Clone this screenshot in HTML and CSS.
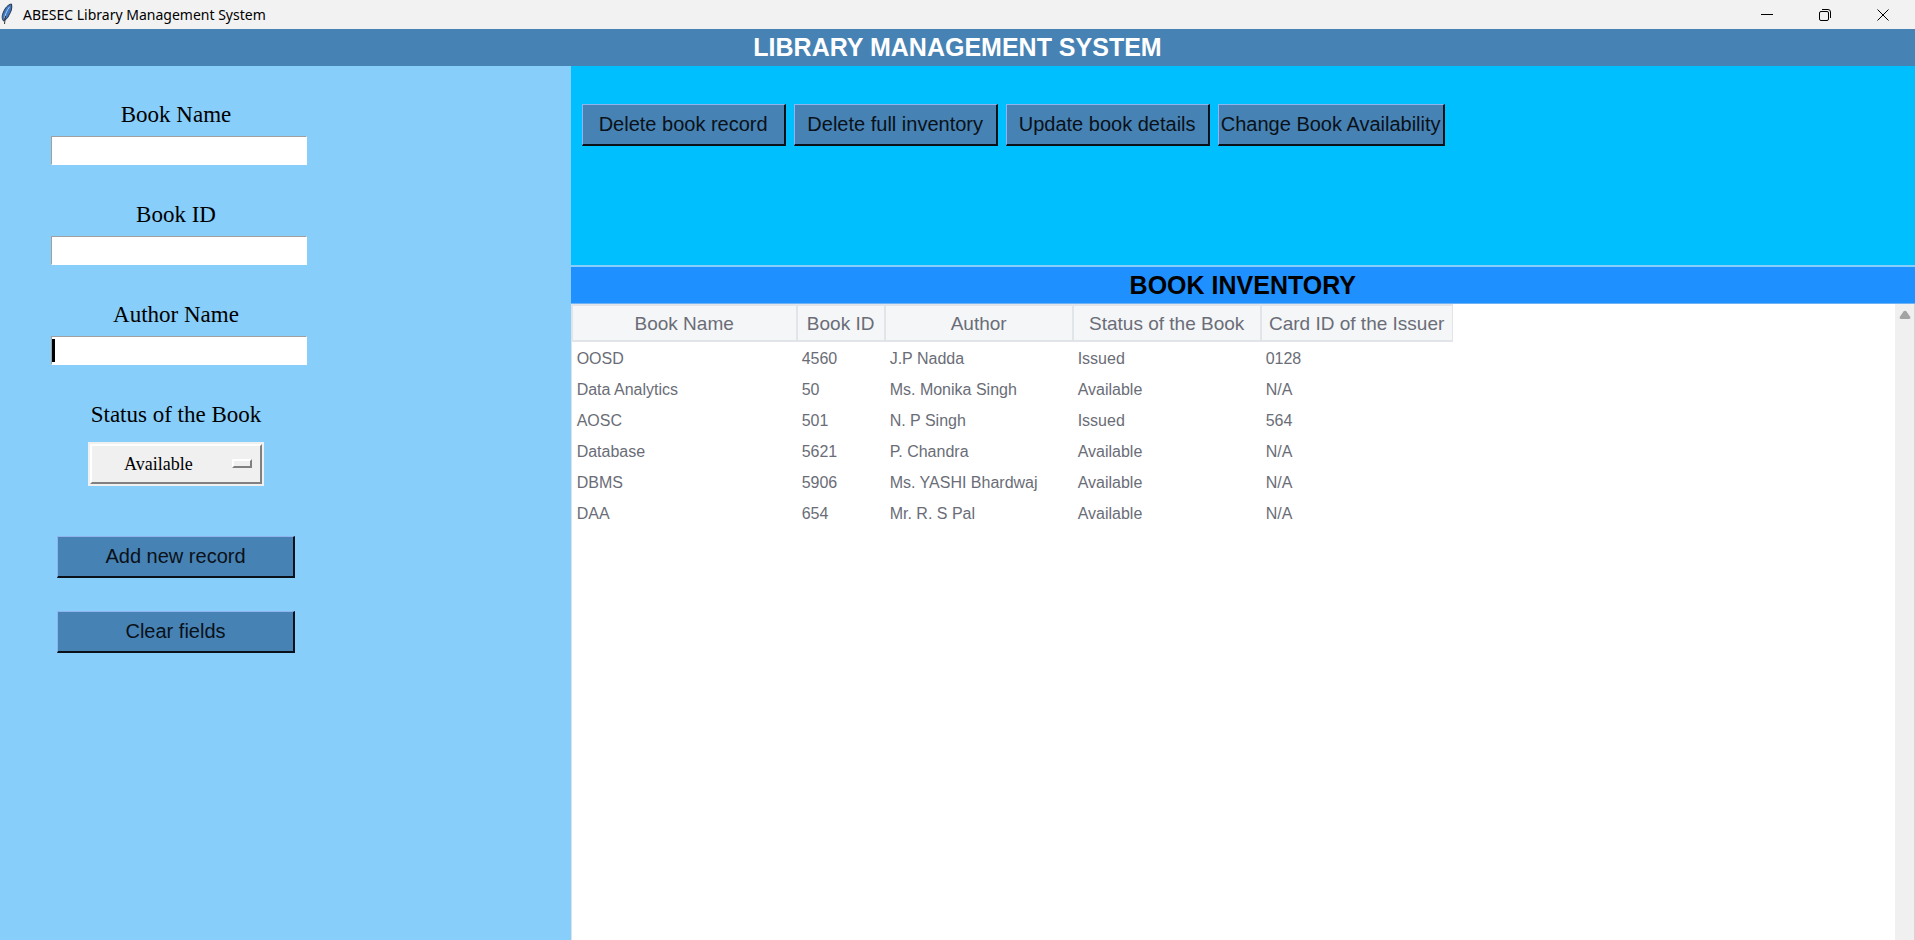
FILE: index.html
```html
<!DOCTYPE html>
<html lang="en">
<head>
<meta charset="utf-8">
<title>ABESEC Library Management System</title>
<link rel="stylesheet" href="styles.css">
</head>
<body>
<div class="window">
  <header class="titlebar">
    <svg class="feather" width="14" height="22" viewBox="0 0 14 22" aria-hidden="true">
      <path d="M11.500 1 C8 1.500 5 5 3.500 9 C2 12 1.500 15 3.500 18 C6 16.500 8 15 9 12 C11 9 12.500 5 11.500 1 Z" fill="#3f76bd" stroke="#27344a" stroke-width="1"/>
      <path d="M9.500 4 C7 7 5.500 11 4.500 15" fill="none" stroke="#a9cdf2" stroke-width="1"/>
      <path d="M5.500 13 L4.500 21" fill="none" stroke="#333" stroke-width="1"/>
    </svg>
    <span class="caption">ABESEC Library Management System</span>
    <div class="controls">
      <button class="control" aria-label="Minimize"><svg width="14" height="14" viewBox="0 0 14 14"><path d="M1 6.500 H13" /></svg></button>
      <button class="control" aria-label="Restore"><svg width="14" height="14" viewBox="0 0 14 14"><rect x="1.500" y="3.500" width="9" height="9" rx="1.500"/><path d="M4 1.500 H10 Q12.500 1.500 12.500 4 V10"/></svg></button>
      <button class="control" aria-label="Close"><svg width="14" height="14" viewBox="0 0 14 14"><path d="M1.500 1.500 L12.500 12.500 M12.500 1.500 L1.500 12.500"/></svg></button>
    </div>
  </header>
  <h1 class="banner">LIBRARY MANAGEMENT SYSTEM</h1>
  <div class="workspace">
    <form class="entry-form">
      <div class="field">
        <label for="book-name">Book Name</label>
        <input id="book-name" type="text">
      </div>
      <div class="field">
        <label for="book-id">Book ID</label>
        <input id="book-id" type="text">
      </div>
      <div class="field">
        <label for="author-name">Author Name</label>
        <input id="author-name" class="active" type="text">
      </div>
      <div class="status">
        <label for="status">Status of the Book</label>
        <div class="option-menu">
          <select id="status">
            <option>Available</option>
            <option>Issued</option>
          </select>
          <span class="indicator"></span>
        </div>
      </div>
      <div class="form-actions">
        <button class="action" type="button">Add new record</button>
        <button class="action" type="button">Clear fields</button>
      </div>
    </form>
    <main class="content">
      <div class="toolbar">
        <button class="action" type="button">Delete book record</button>
        <button class="action" type="button">Delete full inventory</button>
        <button class="action" type="button">Update book details</button>
        <button class="action wide" type="button">Change Book Availability</button>
      </div>
      <h2 class="inventory-title">BOOK INVENTORY</h2>
      <div class="inventory">
        <div class="table-area">
          <table>
            <colgroup><col class="c-name"><col class="c-id"><col class="c-author"><col class="c-status"><col class="c-card"></colgroup>
            <thead>
              <tr><th>Book Name</th><th>Book ID</th><th>Author</th><th>Status of the Book</th><th>Card ID of the Issuer</th></tr>
            </thead>
            <tbody>
              <tr><td>OOSD</td><td>4560</td><td>J.P Nadda</td><td>Issued</td><td>0128</td></tr>
              <tr><td>Data Analytics</td><td>50</td><td>Ms. Monika Singh</td><td>Available</td><td>N/A</td></tr>
              <tr><td>AOSC</td><td>501</td><td>N. P Singh</td><td>Issued</td><td>564</td></tr>
              <tr><td>Database</td><td>5621</td><td>P. Chandra</td><td>Available</td><td>N/A</td></tr>
              <tr><td>DBMS</td><td>5906</td><td>Ms. YASHI Bhardwaj</td><td>Available</td><td>N/A</td></tr>
              <tr><td>DAA</td><td>654</td><td>Mr. R. S Pal</td><td>Available</td><td>N/A</td></tr>
            </tbody>
          </table>
        </div>
        <div class="scrollbar">
          <svg width="12" height="10" viewBox="0 0 12 10" aria-hidden="true"><path d="M4.500 1.500 Q6 0 7.500 1.500 L11 6.500 Q12 9 10 9 H2 Q0 9 1 6.500 Z" fill="#a3a3a3"/></svg>
        </div>
      </div>
    </main>
  </div>
</div>
</body>
</html>
```
FILE: styles.css
```css
* {
  box-sizing: border-box;
}

body {
  margin: 0;
  font-family: "Liberation Sans", Arial, sans-serif;
  color: #000;
}

.window {
  display: flex;
  flex-direction: column;
  min-height: 100vh;
}

.titlebar {
  display: flex;
  align-items: center;
  height: 29px;
  padding-right: 3px;
  background: #f2f2f2;
}

.feather {
  margin-top: -2px;
}

.caption {
  margin-left: 9px;
  font-family: "Noto Sans", sans-serif;
  font-size: 14px;
  line-height: 28px;
}

.controls {
  display: flex;
  margin-left: auto;
}

.control {
  display: flex;
  align-items: center;
  justify-content: center;
  width: 58px;
  height: 28px;
  padding: 0;
  border: 0;
  background: none;
}

.control svg {
  fill: none;
  stroke: #000;
  stroke-width: 1;
}

.banner,
.inventory-title {
  margin: 0;
  font-size: 25px;
  font-weight: bold;
  line-height: 36px;
  text-align: center;
}

.banner {
  border-bottom: 1px solid #4682b4;
  background: #4682b4;
  color: #fff;
}

.workspace {
  display: flex;
  flex: 1;
}

.entry-form {
  flex: 0 0 29.8%;
  padding: 35px 0 0 51px;
  background: #87cefa;
}

.field,
.status,
.form-actions {
  display: flex;
  flex-direction: column;
  align-items: center;
  width: 250px;
}

.field {
  align-items: stretch;
  gap: 7px;
  margin-bottom: 36px;
}

.entry-form label {
  font-family: Georgia, "Liberation Serif", serif;
  font-size: 23px;
  line-height: 28px;
  text-align: center;
}

.field input {
  width: 256px;
  height: 29px;
  padding: 0 3px;
  border: 1px solid #fff;
  border-top-color: #a0a0a0;
  border-left-color: #a0a0a0;
  border-radius: 0;
  background: #fff;
  font-size: 18px;
  outline: 0;
}

.field .active {
  background: #fff linear-gradient(#000, #000) no-repeat 0 2px / 3px 23px;
}

.status {
  gap: 13px;
}

.option-menu {
  position: relative;
  padding: 2px;
  background: #f0f0f0;
}

.option-menu select {
  display: block;
  width: 172px;
  height: 40px;
  padding: 0 32px;
  appearance: none;
  border: 2px solid #fff;
  border-right-color: #808080;
  border-bottom-color: #808080;
  border-radius: 0;
  background: #f0f0f0;
  font-family: Georgia, "Liberation Serif", serif;
  font-size: 18px;
  color: #000;
}

.indicator {
  position: absolute;
  top: 17px;
  right: 12px;
  width: 20px;
  height: 9px;
  border: 2px solid #fff;
  border-right-color: #808080;
  border-bottom-color: #808080;
  background: #f0f0f0;
  pointer-events: none;
}

.form-actions {
  gap: 33px;
  margin-top: 50px;
}

.action {
  width: 204px;
  height: 42px;
  padding: 0;
  border: 1px solid #8fb4f0;
  border-right: 2px solid #0a1118;
  border-bottom: 2px solid #0a1118;
  background: #4682b4;
  font-family: "Liberation Sans", Arial, sans-serif;
  font-size: 20px;
  color: #0a1118;
  white-space: nowrap;
}

.form-actions .action {
  width: 238px;
}

.action.wide {
  width: 227px;
}

.content {
  display: flex;
  flex: 1;
  flex-direction: column;
  min-width: 0;
}

.toolbar {
  display: flex;
  gap: 8px;
  height: 199px;
  padding: 38px 11px 0;
  background: #00bfff;
}

.inventory-title {
  border-top: 2px solid #87cefa;
  border-bottom: 1px solid #6fb3f5;
  background: #1e90ff;
}

.inventory {
  display: flex;
  flex: 1;
  background: #fff;
}

.table-area {
  flex: 1;
  border-left: 1px solid #dfe3ea;
}

table {
  width: 881px;
  border-collapse: separate;
  border-spacing: 0;
  table-layout: fixed;
  color: #6a6d77;
}

.c-name {
  width: 225px;
}

.c-id {
  width: 88px;
}

.c-author,
.c-status {
  width: 188px;
}

.c-card {
  width: 192px;
}

th {
  height: 38px;
  padding: 2px 0 0;
  border: 1px solid #e1e5ea;
  border-width: 2px 1px;
  background: #f5f6f8;
  font-size: 19px;
  font-weight: normal;
  white-space: nowrap;
}

td {
  height: 31px;
  padding: 2px 5px 0;
  font-size: 16px;
  white-space: nowrap;
}

.scrollbar {
  flex: 0 0 20px;
  padding: 6px 0 0 4px;
  border-right: 1px solid #d4d4d4;
  background: #f0f0f0;
}

.scrollbar svg {
  display: block;
}
```
